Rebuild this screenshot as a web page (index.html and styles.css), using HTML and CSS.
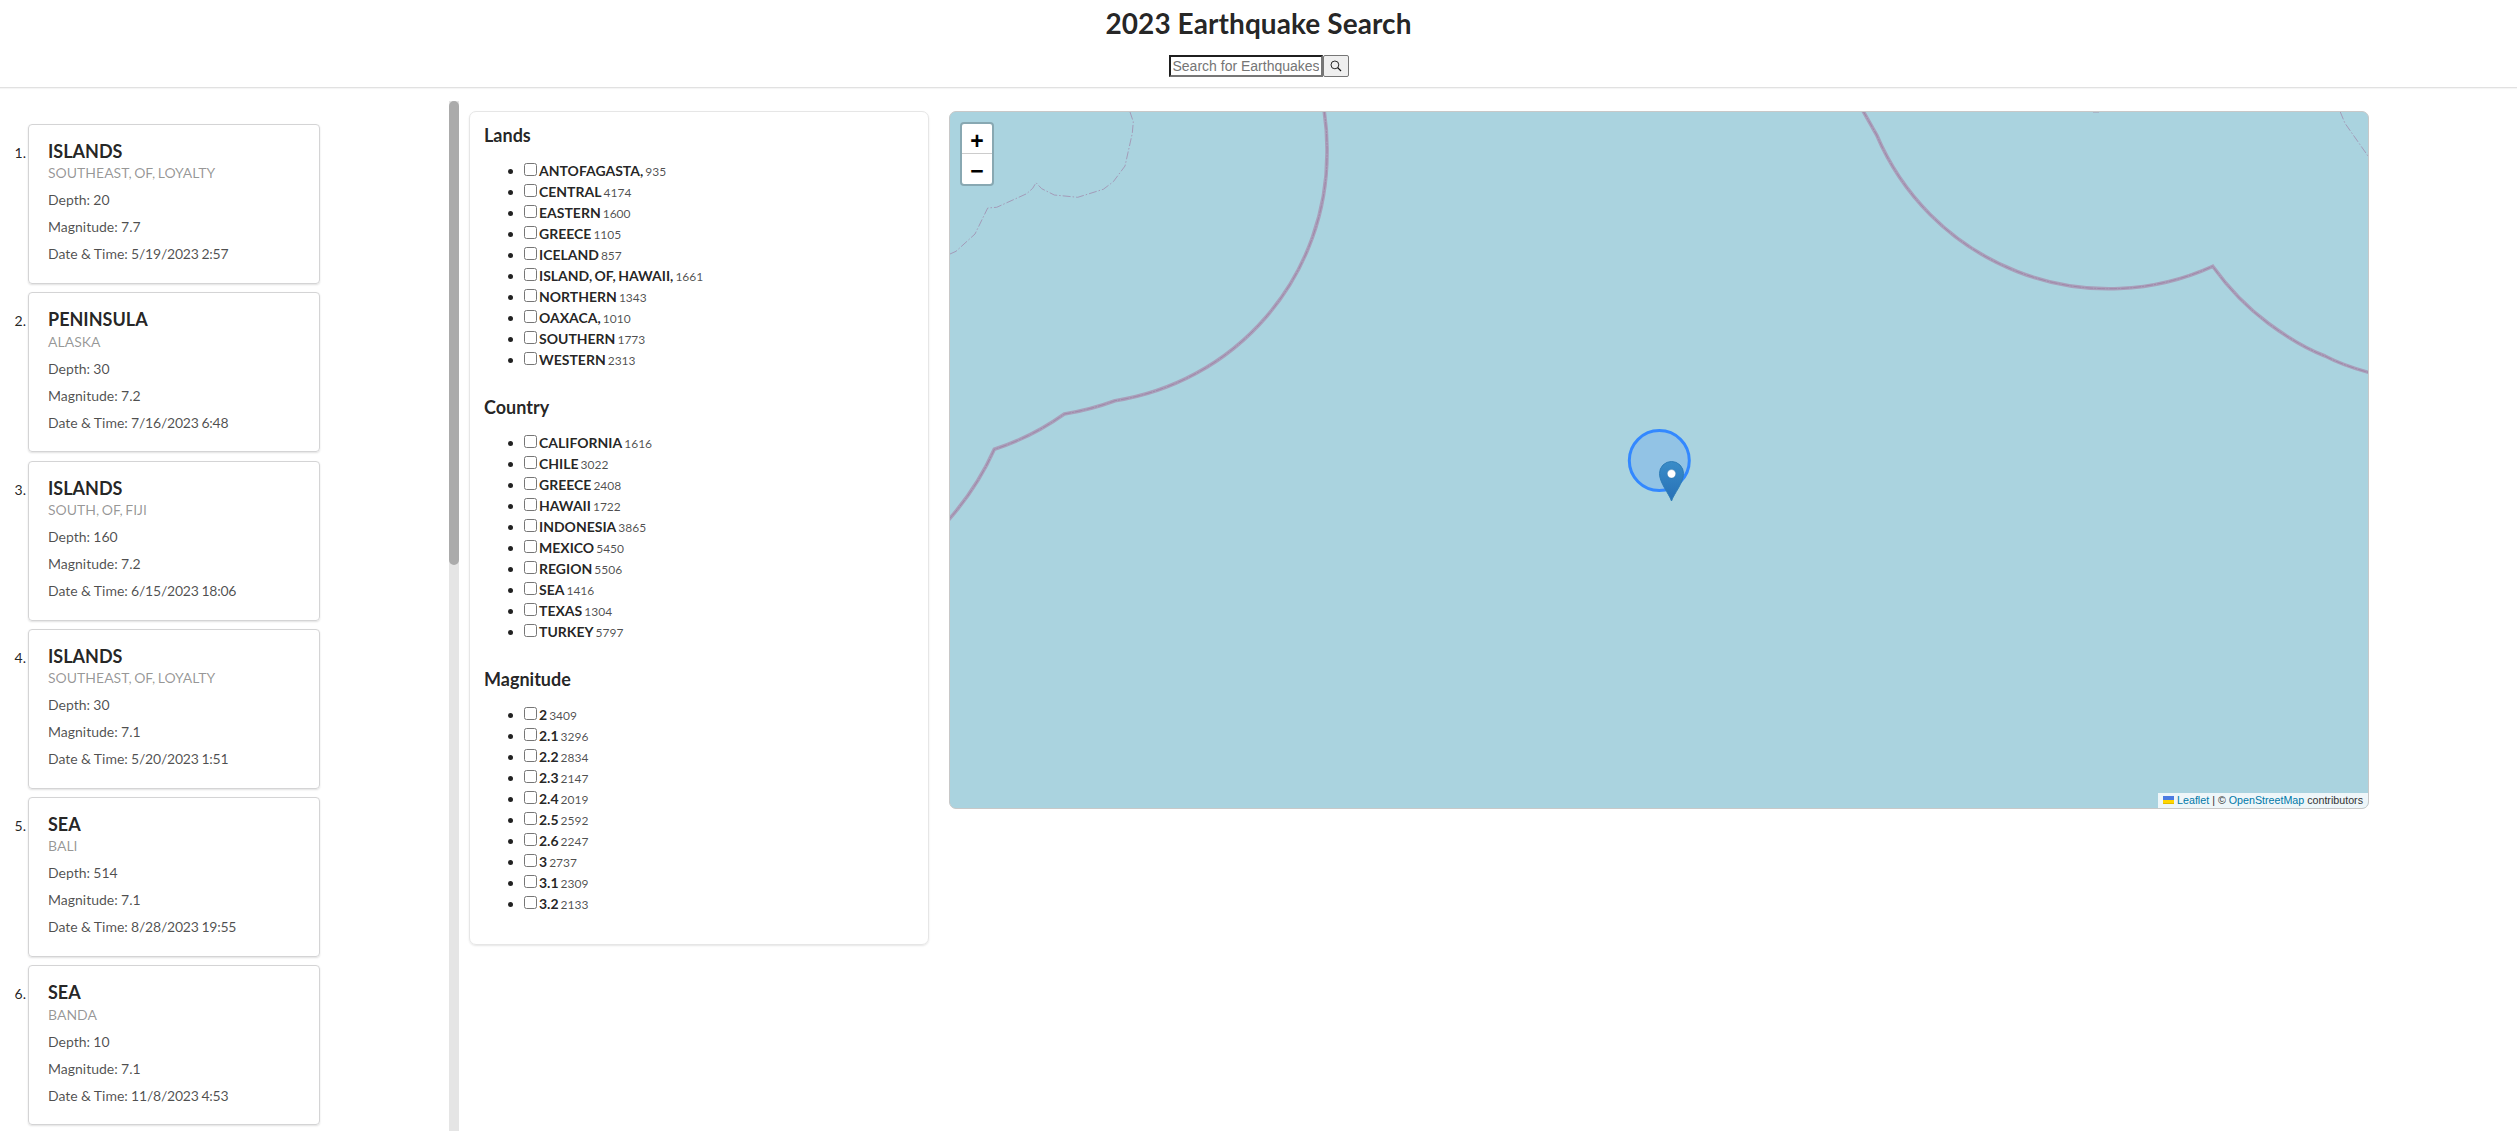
FILE: index.html
```html
<!DOCTYPE html>
<html lang="en">
<head>
<meta charset="utf-8">
<title>2023 Earthquake Search</title>
<link rel="stylesheet" href="styles.css">
</head>
<body>
<header class="header">
  <h1 class="title">2023 Earthquake Search</h1>
  <form class="search">
    <input class="search-input" type="text" placeholder="Search for Earthquakes">
    <button class="search-button" type="button" aria-label="Search">
      <svg width="12" height="12" viewBox="0 0 12 12" fill="none" stroke="#111"><circle cx="4.9" cy="4.9" r="3.9" stroke-width=".9"/><path d="M7.7 7.7 11 11" stroke-width="1.2"/></svg>
    </button>
  </form>
</header>
<main class="main">
  <ol class="results">
    <li class="result"><span class="num">1.</span><article class="card"><h2>ISLANDS</h2><p class="meta">SOUTHEAST, OF, LOYALTY</p><p>Depth: 20</p><p>Magnitude: 7.7</p><p>Date &amp; Time: <time>5/19/2023 2:57</time></p></article></li>
    <li class="result"><span class="num">2.</span><article class="card"><h2>PENINSULA</h2><p class="meta">ALASKA</p><p>Depth: 30</p><p>Magnitude: 7.2</p><p>Date &amp; Time: <time>7/16/2023 6:48</time></p></article></li>
    <li class="result"><span class="num">3.</span><article class="card"><h2>ISLANDS</h2><p class="meta">SOUTH, OF, FIJI</p><p>Depth: 160</p><p>Magnitude: 7.2</p><p>Date &amp; Time: <time>6/15/2023 18:06</time></p></article></li>
    <li class="result"><span class="num">4.</span><article class="card"><h2>ISLANDS</h2><p class="meta">SOUTHEAST, OF, LOYALTY</p><p>Depth: 30</p><p>Magnitude: 7.1</p><p>Date &amp; Time: <time>5/20/2023 1:51</time></p></article></li>
    <li class="result"><span class="num">5.</span><article class="card"><h2>SEA</h2><p class="meta">BALI</p><p>Depth: 514</p><p>Magnitude: 7.1</p><p>Date &amp; Time: <time>8/28/2023 19:55</time></p></article></li>
    <li class="result"><span class="num">6.</span><article class="card"><h2>SEA</h2><p class="meta">BANDA</p><p>Depth: 10</p><p>Magnitude: 7.1</p><p>Date &amp; Time: <time>11/8/2023 4:53</time></p></article></li>
  </ol>
  <div class="scrollbar"><div class="thumb"></div></div>
  <aside class="filters">
    <section>
      <h3>Lands</h3>
      <ul>
        <li><input type="checkbox"><b>ANTOFAGASTA,</b><small>935</small></li>
        <li><input type="checkbox"><b>CENTRAL</b><small>4174</small></li>
        <li><input type="checkbox"><b>EASTERN</b><small>1600</small></li>
        <li><input type="checkbox"><b>GREECE</b><small>1105</small></li>
        <li><input type="checkbox"><b>ICELAND</b><small>857</small></li>
        <li><input type="checkbox"><b>ISLAND, OF, HAWAII,</b><small>1661</small></li>
        <li><input type="checkbox"><b>NORTHERN</b><small>1343</small></li>
        <li><input type="checkbox"><b>OAXACA,</b><small>1010</small></li>
        <li><input type="checkbox"><b>SOUTHERN</b><small>1773</small></li>
        <li><input type="checkbox"><b>WESTERN</b><small>2313</small></li>
      </ul>
    </section>
    <section>
      <h3>Country</h3>
      <ul>
        <li><input type="checkbox"><b>CALIFORNIA</b><small>1616</small></li>
        <li><input type="checkbox"><b>CHILE</b><small>3022</small></li>
        <li><input type="checkbox"><b>GREECE</b><small>2408</small></li>
        <li><input type="checkbox"><b>HAWAII</b><small>1722</small></li>
        <li><input type="checkbox"><b>INDONESIA</b><small>3865</small></li>
        <li><input type="checkbox"><b>MEXICO</b><small>5450</small></li>
        <li><input type="checkbox"><b>REGION</b><small>5506</small></li>
        <li><input type="checkbox"><b>SEA</b><small>1416</small></li>
        <li><input type="checkbox"><b>TEXAS</b><small>1304</small></li>
        <li><input type="checkbox"><b>TURKEY</b><small>5797</small></li>
      </ul>
    </section>
    <section>
      <h3>Magnitude</h3>
      <ul>
        <li><input type="checkbox"><b>2</b><small>3409</small></li>
        <li><input type="checkbox"><b>2.1</b><small>3296</small></li>
        <li><input type="checkbox"><b>2.2</b><small>2834</small></li>
        <li><input type="checkbox"><b>2.3</b><small>2147</small></li>
        <li><input type="checkbox"><b>2.4</b><small>2019</small></li>
        <li><input type="checkbox"><b>2.5</b><small>2592</small></li>
        <li><input type="checkbox"><b>2.6</b><small>2247</small></li>
        <li><input type="checkbox"><b>3</b><small>2737</small></li>
        <li><input type="checkbox"><b>3.1</b><small>2309</small></li>
        <li><input type="checkbox"><b>3.2</b><small>2133</small></li>
      </ul>
    </section>
  </aside>
  <section class="map">
    <svg class="map-canvas" width="1418" height="696" viewBox="950 112 1418 696" fill="none">
      <defs>
        <linearGradient id="pin" x1="0" y1="0" x2="0" y2="1"><stop offset="0" stop-color="#3a8cc8"/><stop offset="1" stop-color="#2670b6"/></linearGradient>
        <path id="west" d="M1324 110A250 250 0 0 1 1327 153.3A250.3 250.3 0 0 1 1115 400.7Q1091 409.5 1064.3 414Q1032 437 994.3 449.3Q977 488 948 520.5"/>
        <path id="east" d="M1862.5 110L1876.7 135A252 252 0 0 0 2212.7 266.3Q2237 300 2268.3 323.3Q2299 346 2325 356Q2343 365.500 2370 372.800"/>
      </defs>
      <g class="border-wide"><use href="#west"/><use href="#east"/></g>
      <g class="border-fine"><use href="#west"/><use href="#east"/></g>
      <path d="M2093 112h6" stroke="#a39ab4"/>
      <path class="border-dashed" d="M950 254L956 251.300 975 234 987.700 208 996.700 207.300 1026.700 193.700 1032.700 188.300 1036 182.700 1041.700 188.700 1054.300 195 1077.700 197.300 1103.300 189.300 1113.300 181.700 1125 166 1132.300 133.300 1133.300 121.700 1130 112M2340.300 112L2345 123.300 2368 156"/>
      <circle cx="1659.300" cy="460.600" r="30" stroke="#3388ff" stroke-width="3" fill="#3388ff" fill-opacity=".2"/>
      <path d="M1671.500 501C1669 493.500 1659.500 483 1659.500 473.500A12 12 0 0 1 1683.500 473.500C1683.500 483 1674 493.500 1671.500 501Z" fill="url(#pin)" stroke="#2e7cb7"/>
      <circle cx="1671.500" cy="473.800" r="4.200" fill="#fff" stroke="#2e6c97" stroke-opacity=".5" stroke-width=".6"/>
    </svg>
    <div class="zoom"><span>+</span><span>−</span></div>
    <div class="attribution"><svg width="11" height="8" viewBox="0 0 12 8" preserveAspectRatio="none"><path fill="#4c7be1" d="M0 0h12v4H0z"/><path fill="#ffd500" d="M0 4h12v3H0z"/><path fill="#e0bc00" d="M0 7h12v1H0z"/></svg> <a>Leaflet</a> <i>|</i> © <a>OpenStreetMap</a> contributors</div>
  </section>
</main>
</body>
</html>
```
FILE: styles.css
```css
* { box-sizing: border-box; }
body {
  margin: 0;
  height: 1131px;
  overflow: hidden;
  display: flex;
  flex-direction: column;
  background: #fff;
  color: rgba(0, 0, 0, .87);
  font: 14px/20px Lato, sans-serif;
}
h1, h2, h3, p, ul, ol { margin: 0; padding: 0; }

.header {
  flex: none;
  height: 88px;
  display: flex;
  flex-direction: column;
  align-items: center;
  border-bottom: 1px solid #e1e1e1;
  box-shadow: 0 1px 1px rgba(0, 0, 0, .04);
}
.title { margin-top: 5px; font-size: 28px; line-height: 36px; letter-spacing: .08px; }
.search { display: flex; margin-top: 14px; }
.search-input {
  width: 154px;
  height: 22px;
  padding: 1px 2px;
  border: 2px solid;
  border-color: #1f1f1f #767676 #767676 #1f1f1f;
  font: 14px "Liberation Sans", Arial, sans-serif;
}
.search-input::placeholder { color: #757575; }
.search-button {
  width: 26px;
  height: 22px;
  padding: 0;
  display: flex;
  align-items: center;
  justify-content: center;
  border: 1px solid #767676;
  border-radius: 2px;
  background: #efefef;
}

.main { flex: 1; min-height: 0; display: flex; align-items: flex-start; }

.results {
  width: 449px;
  height: 1043px;
  padding: 36px 0 0;
  overflow: hidden;
  list-style: none;
}
.result { display: flex; margin-bottom: 8.3px; }
.num { width: 26px; margin-right: 2px; padding-top: 19px; text-align: right; }
.card {
  width: 292px;
  height: 160px;
  padding: 15px 19px;
  border: 1px solid #d4d4d5;
  border-radius: 4px;
  box-shadow: 0 1px 2px rgba(0, 0, 0, .12);
  color: rgba(0, 0, 0, .7);
}
.card h2 { font-size: 18px; line-height: 23px; color: rgba(0, 0, 0, .87); }
.card p { margin-bottom: 7px; word-spacing: -.3px; }
.card time { letter-spacing: -.22px; word-spacing: -.6px; }
.card .meta { padding-top: .3px; color: rgba(0, 0, 0, .42); word-spacing: -1.1px; }

.scrollbar {
  width: 10px;
  height: 1030px;
  margin-top: 13px;
  background: #e5e5e5;
}
.thumb { height: 464px; border-radius: 5px; background: #ababab; }

.filters {
  width: 460px;
  height: 834px;
  margin: 23px 20px 0 10px;
  padding: 9px 14px;
  border: 1px solid #e6e6e6;
  border-radius: 7px;
  box-shadow: 0 1px 2px rgba(0, 0, 0, .1);
}
.filters section { height: 272px; }
.filters h3 { padding-top: 3px; margin-bottom: 13px; font-size: 18px; line-height: 23px; }
.filters ul { padding-left: 40px; }
.filters li { height: 21px; line-height: 21px; white-space: nowrap; word-spacing: -1.1px; }
.filters input { width: 13px; height: 13px; margin: 3px 2px 3px 0; }
.filters small { margin-left: 2px; font-size: 12px; color: rgba(0, 0, 0, .7); }

.map {
  position: relative;
  width: 1420px;
  height: 698px;
  margin-top: 23px;
  overflow: hidden;
  border: 1px solid #c8c8c8;
  border-radius: 7px;
  background: #aad3df;
}
.map-canvas { display: block; }
.border-wide { stroke: #a9a0bb; stroke-width: 3.6; }
.border-fine { stroke: #a186a8; stroke-width: 1; stroke-dasharray: 8 1 2 1; }
.border-dashed { stroke: #a39bb8; stroke-width: 1; stroke-dasharray: 8 2 1.500 2; }
.zoom {
  position: absolute;
  top: 10px;
  left: 10px;
  width: 34px;
  border: 2px solid rgba(0, 0, 0, .2);
  border-radius: 4px;
  background: #fff;
  background-clip: padding-box;
  color: #000;
  font: bold 23px/30px "Liberation Sans", Arial, sans-serif;
  text-align: center;
}
.zoom span { display: block; height: 30px; padding-top: 3px; line-height: 29px; }
.zoom span:first-child { border-bottom: 1px solid #ccc; }
.attribution {
  position: absolute;
  right: 0;
  bottom: 0;
  padding: 0 5px;
  background: rgba(255, 255, 255, .8);
  color: #333;
  font: 10.7px/15px "Liberation Sans", Arial, sans-serif;
  white-space: nowrap;
}
.attribution a { color: #0078a8; }
.attribution i { font-style: normal; }
```
